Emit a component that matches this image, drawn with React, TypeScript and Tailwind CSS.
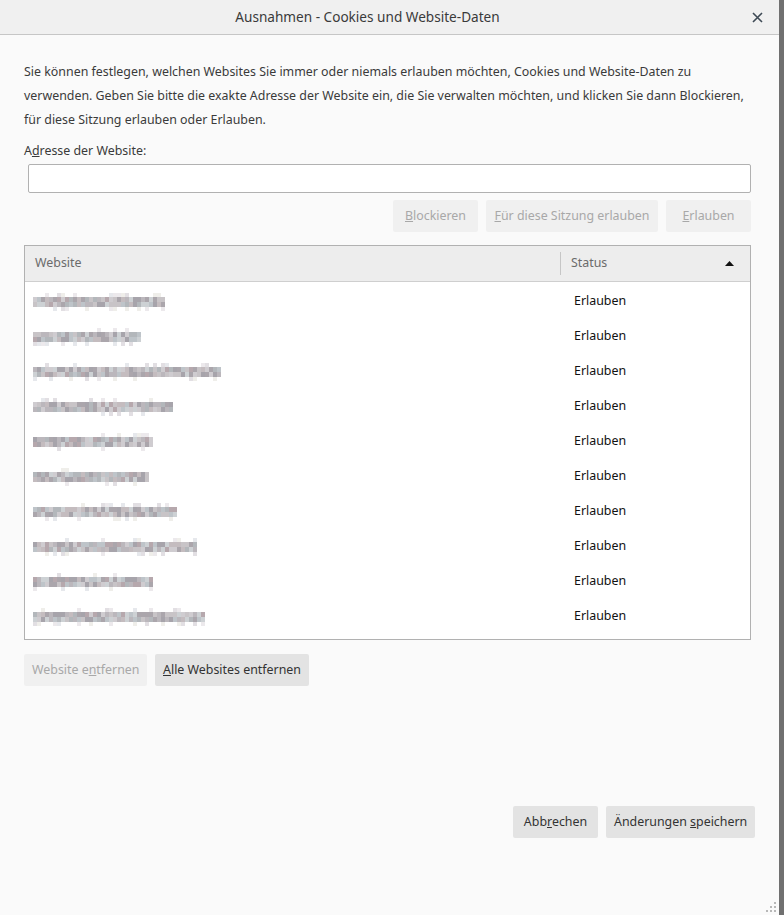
import React from "react";

const FONT = { fontFamily: '"Noto Sans", "Open Sans", sans-serif' };

const sites = [
  { w: 135, seed: 3 },
  { w: 111, seed: 7 },
  { w: 190, seed: 11 },
  { w: 140, seed: 17 },
  { w: 121, seed: 23 },
  { w: 116, seed: 29 },
  { w: 145, seed: 31 },
  { w: 166, seed: 37 },
  { w: 120, seed: 41 },
  { w: 175, seed: 43 },
];

const palette = [
  "#aba6ac",
  "#bbb7bc",
  "#c8c4c7",
  "#cfccd0",
  "#bec4c9",
  "#b6a8ad",
  "#a7a4ab",
  "#cdd1d4",
  "#c4bcbf",
  "#b3b7bb",
];

function rng(seed: number) {
  let s = seed * 9301 + 49297;
  return () => {
    s = (s * 9301 + 49297) % 233280;
    return s / 233280;
  };
}

// Pixelated stand-in for a hidden address
function Mosaic({ w, seed }: { w: number; seed: number }) {
  const r = rng(seed);
  const cols = Math.floor(w / 4);
  const rowsY = [0, 4, 9, 14];
  const rowsH = [4, 5, 5, 4];
  const rects: React.ReactNode[] = [];
  for (let c = 0; c < cols; c++) {
    for (let row = 0; row < 4; row++) {
      const dense = row === 1 || row === 2;
      const v = r();
      if (!dense && v > 0.2) continue;
      const color = dense
        ? palette[Math.floor(r() * palette.length)]
        : ["#ece9ec", "#e6e8ec", "#efeeea", "#e2dfe3"][Math.floor(r() * 4)];
      rects.push(
        <rect key={`${c}-${row}`} x={c * 4} y={rowsY[row]} width={4} height={rowsH[row]} fill={color} />
      );
    }
  }
  return (
    <svg width={cols * 4} height={18} className="block">
      {rects}
    </svg>
  );
}

function Btn({
  children,
  disabled,
  className = "",
}: {
  children: React.ReactNode;
  disabled?: boolean;
  className?: string;
}) {
  return (
    <button
      className={`h-8 whitespace-nowrap rounded-[2px] px-2 text-[12.4px] ${
        disabled ? "bg-[#f0f0f0] text-[#a8a8a8]" : "bg-[#e3e3e3] text-[#333]"
      } ${className}`}
    >
      {children}
    </button>
  );
}

export default function App() {
  return (
    <div className="flex h-[915px] w-[784px] bg-[#707070]" style={FONT}>
      <div className="flex w-[779px] flex-col bg-[#fafafa]">
        {/* title bar */}
        <div className="relative flex h-[35px] shrink-0 items-center justify-center border-b border-[#c6c6c6] bg-[#f0f0f0] pr-[44px]">
          <span className="text-[13.6px] text-[#3a3a3a]">Ausnahmen - Cookies und Website-Daten</span>
          <svg className="absolute right-[16px] top-[12px]" width="11" height="11" viewBox="0 0 11 11">
            <path d="M1 1 L10 10 M10 1 L1 10" stroke="#3e4a55" strokeWidth="1.6" />
          </svg>
        </div>

        <div className="flex flex-1 flex-col pl-6 pr-[28px] pt-[25px] text-[12.4px] text-[#3a3a3a]">
          <p className="leading-[24px]">
            Sie können festlegen, welchen Websites Sie immer oder niemals erlauben möchten, Cookies und Website-Daten zu
            verwenden. Geben Sie bitte die exakte Adresse der Website ein, die Sie verwalten möchten, und klicken Sie dann
            Blockieren, für diese Sitzung erlauben oder Erlauben.
          </p>
          <div className="mt-[10px] leading-[18px]">
            A<span className="underline">d</span>resse der Website:
          </div>
          <div className="ml-1 mt-[4px] h-[29px] rounded-[2px] border border-[#b1b1b1] bg-white" />
          <div className="mt-[7px] flex justify-end gap-2">
            <Btn disabled className="w-[85px]">
              <span className="underline">B</span>lockieren
            </Btn>
            <Btn disabled className="w-[172px]">
              <span className="underline">F</span>ür diese Sitzung erlauben
            </Btn>
            <Btn disabled className="w-[85px]">
              <span className="underline">E</span>rlauben
            </Btn>
          </div>

          {/* site list */}
          <div className="mt-[13px] flex h-[395px] flex-col border border-[#b1b1b1] bg-white">
            <div className="flex h-[36px] shrink-0 items-center border-b border-[#cfcfcf] bg-[#ededed] text-[#6b6b6b]">
              <div className="flex-1 pl-[10px]">Website</div>
              <div className="h-[23px] w-px bg-[#c6c6c6]" />
              <div className="flex w-[189px] items-center justify-between pl-[10px] pr-[16px]">
                <span>Status</span>
                <svg width="9" height="5" viewBox="0 0 9 5">
                  <path d="M0 5 L4.5 0 L9 5 Z" fill="#111" />
                </svg>
              </div>
            </div>
            <div className="flex flex-col pt-[2px]">
              {sites.map((s, i) => (
                <div key={i} className="flex h-[35px] shrink-0 items-center">
                  <div className="flex-1 pl-2">
                    <Mosaic w={s.w} seed={s.seed} />
                  </div>
                  <div className="w-[176px] text-[#111]">Erlauben</div>
                </div>
              ))}
            </div>
          </div>

          <div className="mt-[14px] flex gap-2">
            <Btn disabled className="w-[123px]">
              Website e<span className="underline">n</span>tfernen
            </Btn>
            <Btn className="w-[154px]">
              <span className="underline">A</span>lle Websites entfernen
            </Btn>
          </div>

          <div className="mt-[120px] flex justify-end gap-2">
            <Btn className="w-[85px]">
              Abb<span className="underline">r</span>echen
            </Btn>
            <Btn className="mr-[-4px] w-[149px]">
              Änderungen <span className="underline">s</span>peichern
            </Btn>
          </div>

          <div className="flex flex-1 items-end justify-end pb-[3px]">
            <svg width="10" height="10" viewBox="0 0 10 10" className="mr-[-25px]">
              <rect x="8" y="0" width="2" height="2" fill="#b8b8b8" />
              <rect x="4" y="4" width="2" height="2" fill="#b8b8b8" />
              <rect x="8" y="4" width="2" height="2" fill="#b8b8b8" />
              <rect x="0" y="8" width="2" height="2" fill="#b8b8b8" />
              <rect x="4" y="8" width="2" height="2" fill="#b8b8b8" />
              <rect x="8" y="8" width="2" height="2" fill="#b8b8b8" />
            </svg>
          </div>
        </div>
      </div>
    </div>
  );
}
